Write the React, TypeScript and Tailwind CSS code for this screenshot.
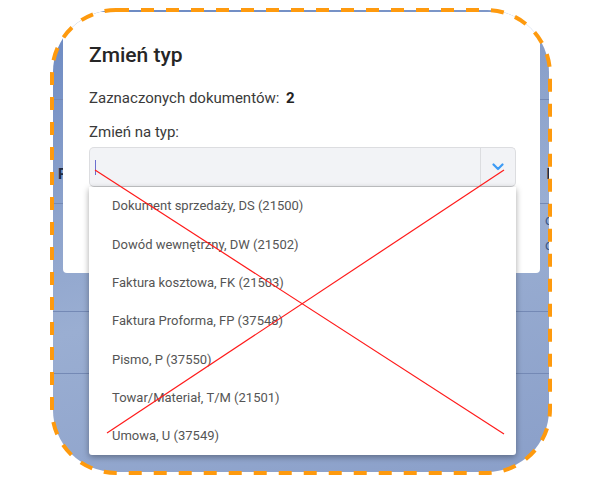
import React from "react";

const items = [
  "Dokument sprzedaży, DS (21500)",
  "Dowód wewnętrzny, DW (21502)",
  "Faktura kosztowa, FK (21503)",
  "Faktura Proforma, FP (37548)",
  "Pismo, P (37550)",
  "Towar/Materiał, T/M (21501)",
  "Umowa, U (37549)",
];

export default function App() {
  return (
    <div className="relative w-[600px] h-[498px] bg-white overflow-hidden font-['Roboto',sans-serif]">
      <div className="pt-[10px] pl-[53px]">
        <div className="relative w-[496px] h-[462px] rounded-[62px] overflow-hidden bg-[linear-gradient(165deg,#6a88c2_0%,#8da3cc_35%,#9aaed2_55%,#8a9fc9_100%)]">
          {/* background table */}
          <div className="flex flex-col">
            <div className="h-[90px] border-b border-[#7489b5]" />
            <div className="h-[104px] border-b border-[#7489b5] flex items-end pb-[18px] justify-between pl-[5px] pr-0">
              <span className="text-[15px] font-bold text-[#1f2b44]">P</span>
              <span className="text-[15px] font-bold text-[#1f2b44] mr-[-8px]">N</span>
            </div>
            <div className="h-[108px] border-b border-[#7489b5] flex flex-col items-end pt-[6px] gap-[4px] text-[14px] text-[#3d5a8a]">
              <span className="mr-[-4px]">o</span>
              <span className="mr-[-4px]">o</span>
            </div>
            <div className="h-[62px] border-b border-[#7489b5]" />
          </div>

          {/* modal dialog */}
          <div className="absolute left-[10px] top-[2px] w-[477px] h-[261px] bg-white rounded-[4px] pl-[26px] pr-[24px] pt-[30px]">
            <div className="text-[21px] leading-[26px] font-medium text-[#262626]">Zmień typ</div>
            <div className="mt-[21px] text-[15px] leading-[18px] text-[#3a3a3a]">
              Zaznaczonych dokumentów: <span className="ml-[3px] font-bold text-[#222]">2</span>
            </div>
            <div className="mt-[16px] text-[15px] leading-[18px] text-[#3a3a3a]">Zmień na typ:</div>
            <div className="relative mt-[6px] w-[427px]">
              <div className="flex h-[40px] bg-[#f2f3f6] border border-[#dcdde0] border-b-[#c9cacd] rounded-[5px]">
                <div className="flex-1 flex items-center pl-[5px]">
                  <div className="w-px h-[15px] bg-[#6b6fd0]" />
                </div>
                <div className="w-[35px] border-l border-[#dcdde0] flex items-center justify-center">
                  <svg width="12" height="8" viewBox="0 0 12 8">
                    <path d="M1.5 1.5 L6 6 L10.5 1.5" fill="none" stroke="#3d9bf5" strokeWidth="2.2" strokeLinecap="round" strokeLinejoin="round" />
                  </svg>
                </div>
              </div>
              {/* dropdown */}
              <div className="absolute left-0 top-[40px] w-[427px] bg-white rounded-b-[3px] shadow-[0_2px_6px_rgba(0,0,0,0.35)] flex flex-col">
                {items.map((t) => (
                  <div key={t} className="h-[38.3px] flex items-center pl-[23px] text-[13px] text-[#555]">
                    {t}
                  </div>
                ))}
              </div>
            </div>
          </div>
        </div>
      </div>

      {/* annotation overlay */}
      <svg className="absolute inset-0 pointer-events-none" width="600" height="498" viewBox="0 0 600 498">
        <rect x="52" y="10" width="498" height="463" rx="64" fill="none" stroke="#fe9a0e" strokeWidth="4" strokeDasharray="13 12" />
        <line x1="95" y1="170" x2="504" y2="434" stroke="#ff1a1a" strokeWidth="1.2" />
        <line x1="107" y1="433" x2="504" y2="170" stroke="#ff1a1a" strokeWidth="1.2" />
      </svg>
    </div>
  );
}
